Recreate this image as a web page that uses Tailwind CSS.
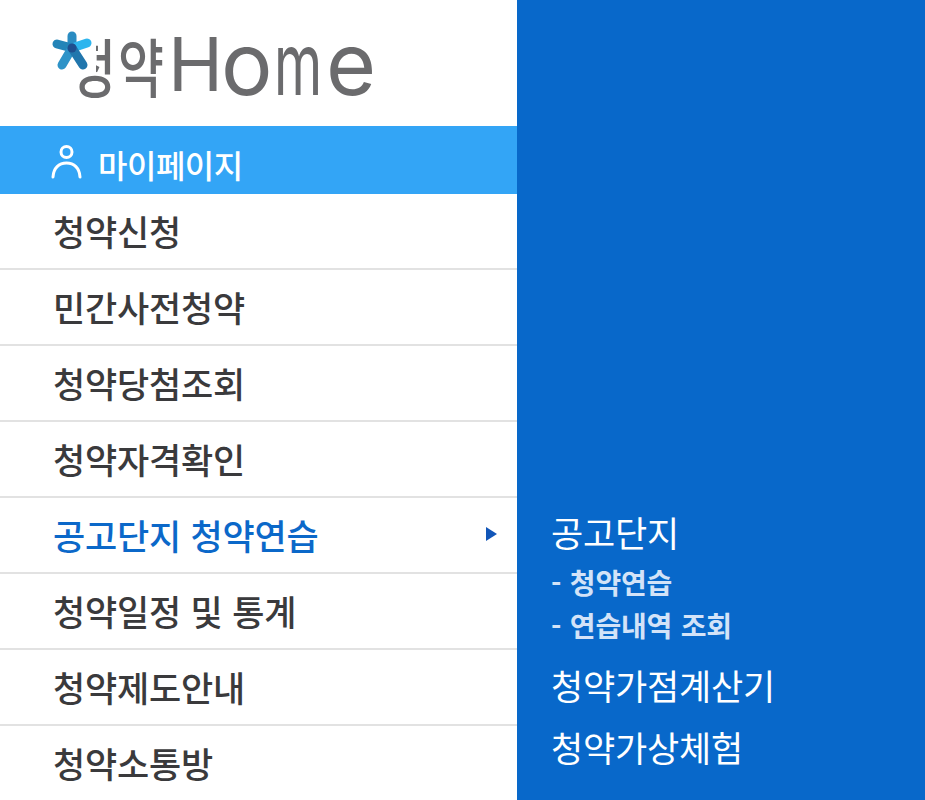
<!DOCTYPE html>
<html lang="ko"><head><meta charset="utf-8"><script src="https://cdn.jsdelivr.net/npm/@tailwindcss/browser@4"></script></head>
<body class="m-0 bg-white overflow-hidden">
<div class="flex w-[925px] h-[800px] overflow-hidden font-['Noto_Sans_CJK_KR','Noto_Sans',sans-serif]">
  <aside class="w-[517px] shrink-0 flex flex-col bg-white">
    <div class="h-[126px] shrink-0 pl-[50px] pt-[24px]">
      <div class="relative flex items-end h-[80px] w-[340px] text-[#6b6b6d] blur-[0.5px]">
        <span class="ml-[20px] w-[48px] text-[64px] font-medium leading-[68px] scale-x-[0.78] origin-left mb-[6px]">청</span>
        <span class="w-[54px] text-[64px] font-medium leading-[68px] scale-x-[0.78] origin-left mb-[6px]">약</span>
        <span class="w-[53px] font-['Inter',sans-serif] text-[74px] font-normal leading-[68px] -ml-[4px] mb-[6px]">H</span>
        <span class="w-[53px] font-['Inter',sans-serif] text-[86px] font-normal leading-[68px] mb-[6px]">o</span>
        <span class="w-[52px] font-['Inter',sans-serif] text-[86px] font-normal leading-[68px] scale-x-[0.64] origin-left mb-[6px]">m</span>
        <span class="font-['Inter',sans-serif] text-[86px] font-normal leading-[68px] mb-[6px]">e</span>
        <svg class="absolute left-0 top-[6px]" width="50" height="46" viewBox="0 0 50 46">
          <rect x="0" y="0" width="46" height="45" fill="#fff"/>
          <g fill="none" stroke-linecap="round" stroke-width="9">
            <path d="M22 6 L22 18" stroke="#2a8cc2"/>
            <path d="M7 14 L22 18" stroke="#2384b8"/>
            <path d="M37 13 L22 18" stroke="#2db5ee"/>
            <path d="M22 18 L12 35" stroke="#2e93c8"/>
            <path d="M22 18 L33 35" stroke="#2176ad"/>
          </g>
          <circle cx="22" cy="18" r="4.500" fill="#1f4f8f"/>
        </svg>
      </div>
    </div>
    <a class="h-[68px] shrink-0 flex items-center pl-[50px] bg-[#33a5f6] text-white">
      <svg class="mt-[4px]" width="32" height="36" viewBox="0 0 32 36" fill="none" stroke="#fff" stroke-width="3" stroke-linecap="round">
        <circle cx="16.500" cy="8" r="5.500"/><path d="M3 33 C3.500 24 9 19 16.500 19 C24 19 29.500 24 30 33"/>
      </svg>
      <span class="ml-[16px] text-[32px] font-medium leading-none tracking-[-0.5px] mt-[8px]">마이페이지</span>
    </a>
    <nav class="flex flex-col text-[#3a3a3c] text-[35px] font-medium tracking-[-0.2px]">
      <a class="h-[76px] flex items-center pl-[53px] border-b-2 border-[#e2e2e2]"><span>청약신청</span></a>
      <a class="h-[76px] flex items-center pl-[53px] border-b-2 border-[#e2e2e2]"><span>민간사전청약</span></a>
      <a class="h-[76px] flex items-center pl-[53px] border-b-2 border-[#e2e2e2]"><span>청약당첨조회</span></a>
      <a class="h-[76px] flex items-center pl-[53px] border-b-2 border-[#e2e2e2]"><span>청약자격확인</span></a>
      <a class="h-[76px] flex items-center justify-between pl-[53px] pr-[20px] border-b-2 border-[#e2e2e2] text-[#0b68c9]"><span>공고단지 청약연습</span><svg width="11" height="14" viewBox="0 0 11 14" class="-mt-[2px]"><path d="M0 0 L11 7 L0 14Z" fill="#1256b8"/></svg></a>
      <a class="h-[76px] flex items-center pl-[53px] border-b-2 border-[#e2e2e2]"><span>청약일정 및 통계</span></a>
      <a class="h-[76px] flex items-center pl-[53px] border-b-2 border-[#e2e2e2]"><span>청약제도안내</span></a>
      <a class="h-[76px] flex items-center pl-[53px] border-b-2 border-[#e2e2e2]"><span>청약소통방</span></a>
    </nav>
  </aside>
  <section class="flex-1 bg-[#0868ca] pl-[34px] pt-[507px] text-white">
    <p class="text-[35px] font-normal leading-[50px] tracking-[-0.2px]">공고단지</p>
    <ul class="text-[#d3e3f8] text-[28px] font-bold tracking-[-0.2px] [word-spacing:1px] mt-[4px]">
      <li class="h-[43px] leading-[43px]">- 청약연습</li>
      <li class="h-[43px] leading-[43px]">- 연습내역 조회</li>
    </ul>
    <p class="text-[35px] font-normal leading-[50px] tracking-[-0.2px] mt-[13px]">청약가점계산기</p>
    <p class="text-[35px] font-normal leading-[50px] tracking-[-0.2px] mt-[12px]">청약가상체험</p>
  </section>
</div>
</body></html>
